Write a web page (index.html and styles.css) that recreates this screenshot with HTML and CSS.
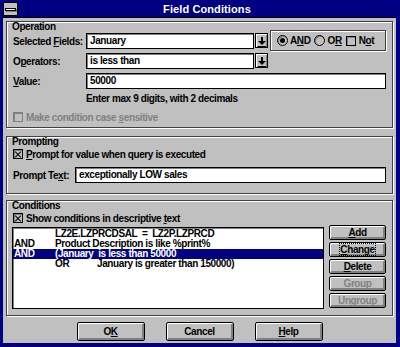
FILE: index.html
```html
<!DOCTYPE html>
<html lang="en">
<head>
    <meta charset="UTF-8">
    <title>Field Conditions</title>
    <link rel="stylesheet" href="styles.css">
</head>
<body>
    <div class="window">
        <div class="titlebar">
            <div class="sysmenu"><span></span></div>
            <div class="title">Field Conditions</div>
        </div>

        <div class="client">
            <!-- Operation -->
            <div class="group group-operation">
                <div class="group-label">Operation</div>

                <div class="form-row">
                    <div class="field-label">Selected <u>F</u>ields:</div>
                    <div class="combo">
                        <div class="combo-text">January</div>
                        <div class="combo-btn">
                            <svg width="10" height="12" viewBox="0 0 10 12"><rect x="4" y="2" width="2" height="4" fill="#000"/><polygon points="1,6 9,6 5,10" fill="#000"/><rect x="1" y="11" width="8" height="1" fill="#000"/></svg>
                        </div>
                    </div>
                    <div class="radio-box">
                        <span class="radio checked"></span><span class="opt">A<u>N</u>D</span>
                        <span class="radio"></span><span class="opt">O<u>R</u></span>
                        <span class="check"></span><span class="opt">N<u>o</u>t</span>
                    </div>
                </div>

                <div class="form-row">
                    <div class="field-label">O<u>p</u>erators:</div>
                    <div class="combo">
                        <div class="combo-text">is less than</div>
                        <div class="combo-btn">
                            <svg width="10" height="12" viewBox="0 0 10 12"><rect x="4" y="2" width="2" height="4" fill="#000"/><polygon points="1,6 9,6 5,10" fill="#000"/><rect x="1" y="11" width="8" height="1" fill="#000"/></svg>
                        </div>
                    </div>
                </div>

                <div class="form-row">
                    <div class="field-label"><u>V</u>alue:</div>
                    <div class="textbox wide">50000</div>
                </div>

                <div class="note">Enter max 9 digits, with 2 decimals</div>

                <div class="check-row disabled">
                    <span class="check"></span>
                    <span>Make condition case <u>s</u>ensitive</span>
                </div>
            </div>

            <!-- Prompting -->
            <div class="group group-prompting">
                <div class="group-label">Prompting</div>
                <div class="check-row">
                    <span class="check checked"></span>
                    <span><u>P</u>rompt for value when query is executed</span>
                </div>
                <div class="form-row prompt-row">
                    <div class="field-label short">Prompt Te<u>x</u>t:</div>
                    <div class="textbox wide">exceptionally LOW sales</div>
                </div>
            </div>

            <!-- Conditions -->
            <div class="group group-conditions">
                <div class="group-label">Conditions</div>
                <div class="check-row">
                    <span class="check checked"></span>
                    <span>Show conditions in descriptive <u>t</u>ext</span>
                </div>
                <div class="conditions-body">
                    <div class="listbox">
                        <div class="list-item"><span class="col-op"></span><span>LZ2E.LZPRCDSAL&nbsp; =&nbsp; LZ2P.LZPRCD</span></div>
                        <div class="list-item"><span class="col-op">AND</span><span>Product Description is like %print%</span></div>
                        <div class="list-item selected"><span class="col-op">AND</span><span>(January&nbsp; is less than 50000</span></div>
                        <div class="list-item"><span class="col-op"></span><span class="col-sub">OR</span><span>January is greater than 150000)</span></div>
                    </div>
                    <div class="side-buttons">
                        <button class="btn"><u>A</u>dd</button>
                        <button class="btn"><span class="focus"><u>C</u>hange</span></button>
                        <button class="btn"><u>D</u>elete</button>
                        <button class="btn disabled"><u>G</u>roup</button>
                        <button class="btn disabled"><u>U</u>ngroup</button>
                    </div>
                </div>
            </div>

            <div class="dialog-buttons">
                <button class="btn big">O<u>K</u></button>
                <button class="btn big">Cancel</button>
                <button class="btn big"><u>H</u>elp</button>
            </div>
        </div>
    </div>
</body>
</html>
```

FILE: styles.css
```css
* {
    box-sizing: border-box;
}

body {
    margin: 0;
    font-family: "Liberation Sans", Arial, sans-serif;
    font-weight: bold;
    font-size: 10px;
    letter-spacing: -0.4px;
    color: #000;
    background: #000080;
}

u {
    text-decoration: underline;
    text-underline-offset: 1px;
}

.window {
    width: 400px;
    height: 347px;
    background: #000080;
    padding: 0 4px 4px 3px;
    display: flex;
    flex-direction: column;
}

/* title bar */
.titlebar {
    height: 17px;
    display: flex;
    align-items: center;
}

.sysmenu {
    width: 15px;
    height: 14px;
    margin-top: 1px;
    background: #c0c0c0;
    border: 1px solid #000;
    display: flex;
    align-items: center;
    justify-content: center;
}

.sysmenu span {
    width: 11px;
    height: 3px;
    background: #fff;
    border: 1px solid #000;
    box-shadow: 1px 1px 0 #808080;
}

.title {
    flex: 1;
    text-align: center;
    color: #fff;
    font-size: 11px;
    letter-spacing: 0.1px;
}

/* client area */
.client {
    flex: 1;
    background: #c0c0c0;
    border-top: 1px solid #000;
    padding: 3px 3px 2px 3px;
    display: flex;
    flex-direction: column;
}

.group {
    border: 1px solid #404040;
    box-shadow: inset 1px 1px 0 #fff, 1px 1px 0 #fff;
    padding: 0 6px 0 6px;
    display: flex;
    flex-direction: column;
}

.group-label {
    height: 10px;
    line-height: 10px;
    margin-left: -1px;
    align-self: flex-start;
}

.group-operation {
    height: 107px;
}

.group-prompting {
    height: 58px;
    margin-top: 8px;
}

.group-conditions {
    height: 116px;
    margin-top: 6px;
}

.form-row {
    display: flex;
    align-items: center;
    height: 16px;
    margin-top: 4px;
}

.group-label + .form-row {
    margin-top: 1px;
}

.field-label {
    width: 73px;
    white-space: nowrap;
}

.field-label.short {
    width: 62px;
}

.combo {
    display: flex;
    width: 182px;
    height: 16px;
}

.combo-text,
.textbox {
    height: 16px;
    background: #fff;
    border: 1px solid #000;
    box-shadow: inset 1px 1px 0 #808080;
    padding: 0 3px;
    line-height: 14px;
    white-space: nowrap;
}

.combo-text {
    flex: 1;
}

.textbox.wide {
    flex: 1;
}

.combo-btn {
    width: 13px;
    height: 15px;
    margin-left: 1px;
    background: #c0c0c0;
    border: 1px solid #000;
    box-shadow: inset 1px 1px 0 #fff, inset -1px -1px 0 #808080;
    display: flex;
    align-items: center;
    justify-content: center;
}

.radio-box {
    display: flex;
    align-items: center;
    height: 21px;
    margin: -3px 0 -2px 2px;
    width: 116px;
    border: 1px solid #404040;
    box-shadow: inset 1px 1px 0 #fff, 1px 1px 0 #fff;
    padding-left: 6px;
}

.radio {
    width: 11px;
    height: 11px;
    border-radius: 50%;
    border: 1px solid #000;
    box-shadow: inset 1px 1px 0 #808080;
    margin-right: 2px;
    display: flex;
    align-items: center;
    justify-content: center;
}

.radio.checked::after {
    content: "";
    width: 5px;
    height: 5px;
    border-radius: 50%;
    background: #000;
}

.opt {
    margin-right: 4px;
}

.check {
    width: 10px;
    height: 10px;
    border: 1px solid #000;
    box-shadow: inset 1px 1px 0 #808080;
    margin-right: 3px;
    position: relative;
    flex-shrink: 0;
}

.check.checked::before,
.check.checked::after {
    content: "";
    position: absolute;
    left: 0;
    top: 3.5px;
    width: 8px;
    height: 1px;
    background: #000;
    transform: rotate(45deg);
}

.check.checked::after {
    transform: rotate(-45deg);
}

.note {
    margin-top: 4px;
    margin-left: 73px;
    height: 12px;
    line-height: 12px;
}

.check-row {
    display: flex;
    align-items: center;
    height: 12px;
    margin-top: 6px;
    white-space: nowrap;
}

.check-row.disabled {
    color: #808080;
}

.check-row.disabled .check {
    border-color: #808080;
}

.group-prompting .check-row,
.group-conditions .check-row {
    margin-top: 1px;
}

.prompt-row {
    margin-top: 7px;
}

/* conditions list */
.conditions-body {
    display: flex;
    margin-top: 3px;
    margin-left: -1px;
}

.listbox {
    width: 312px;
    height: 82px;
    background: #fff;
    border: 1px solid #000;
    box-shadow: inset 1px 1px 0 #808080;
    padding-top: 1px;
}

.list-item {
    display: flex;
    height: 10px;
    line-height: 10px;
    padding-left: 1px;
    white-space: nowrap;
}

.list-item.selected {
    background: #000080;
    color: #fff;
}

.col-op {
    width: 41px;
}

.col-sub {
    width: 42px;
}

.side-buttons {
    display: flex;
    flex-direction: column;
    gap: 2px;
    margin-left: 5px;
    margin-top: -2px;
}

.btn {
    font: inherit;
    letter-spacing: inherit;
    color: #000;
    width: 57px;
    height: 15px;
    padding: 0;
    background: #c0c0c0;
    border: 1px solid #000;
    border-radius: 2px;
    box-shadow: inset 1px 1px 0 #fff, inset -2px -2px 0 #808080;
    line-height: 12px;
}

.btn.disabled {
    color: #808080;
}

.focus {
    outline: 1px dotted #000;
    outline-offset: 0;
}

.dialog-buttons {
    display: flex;
    justify-content: center;
    gap: 21px;
    margin-top: 6px;
}

.btn.big {
    width: 68px;
    height: 19px;
    line-height: 16px;
}
```
